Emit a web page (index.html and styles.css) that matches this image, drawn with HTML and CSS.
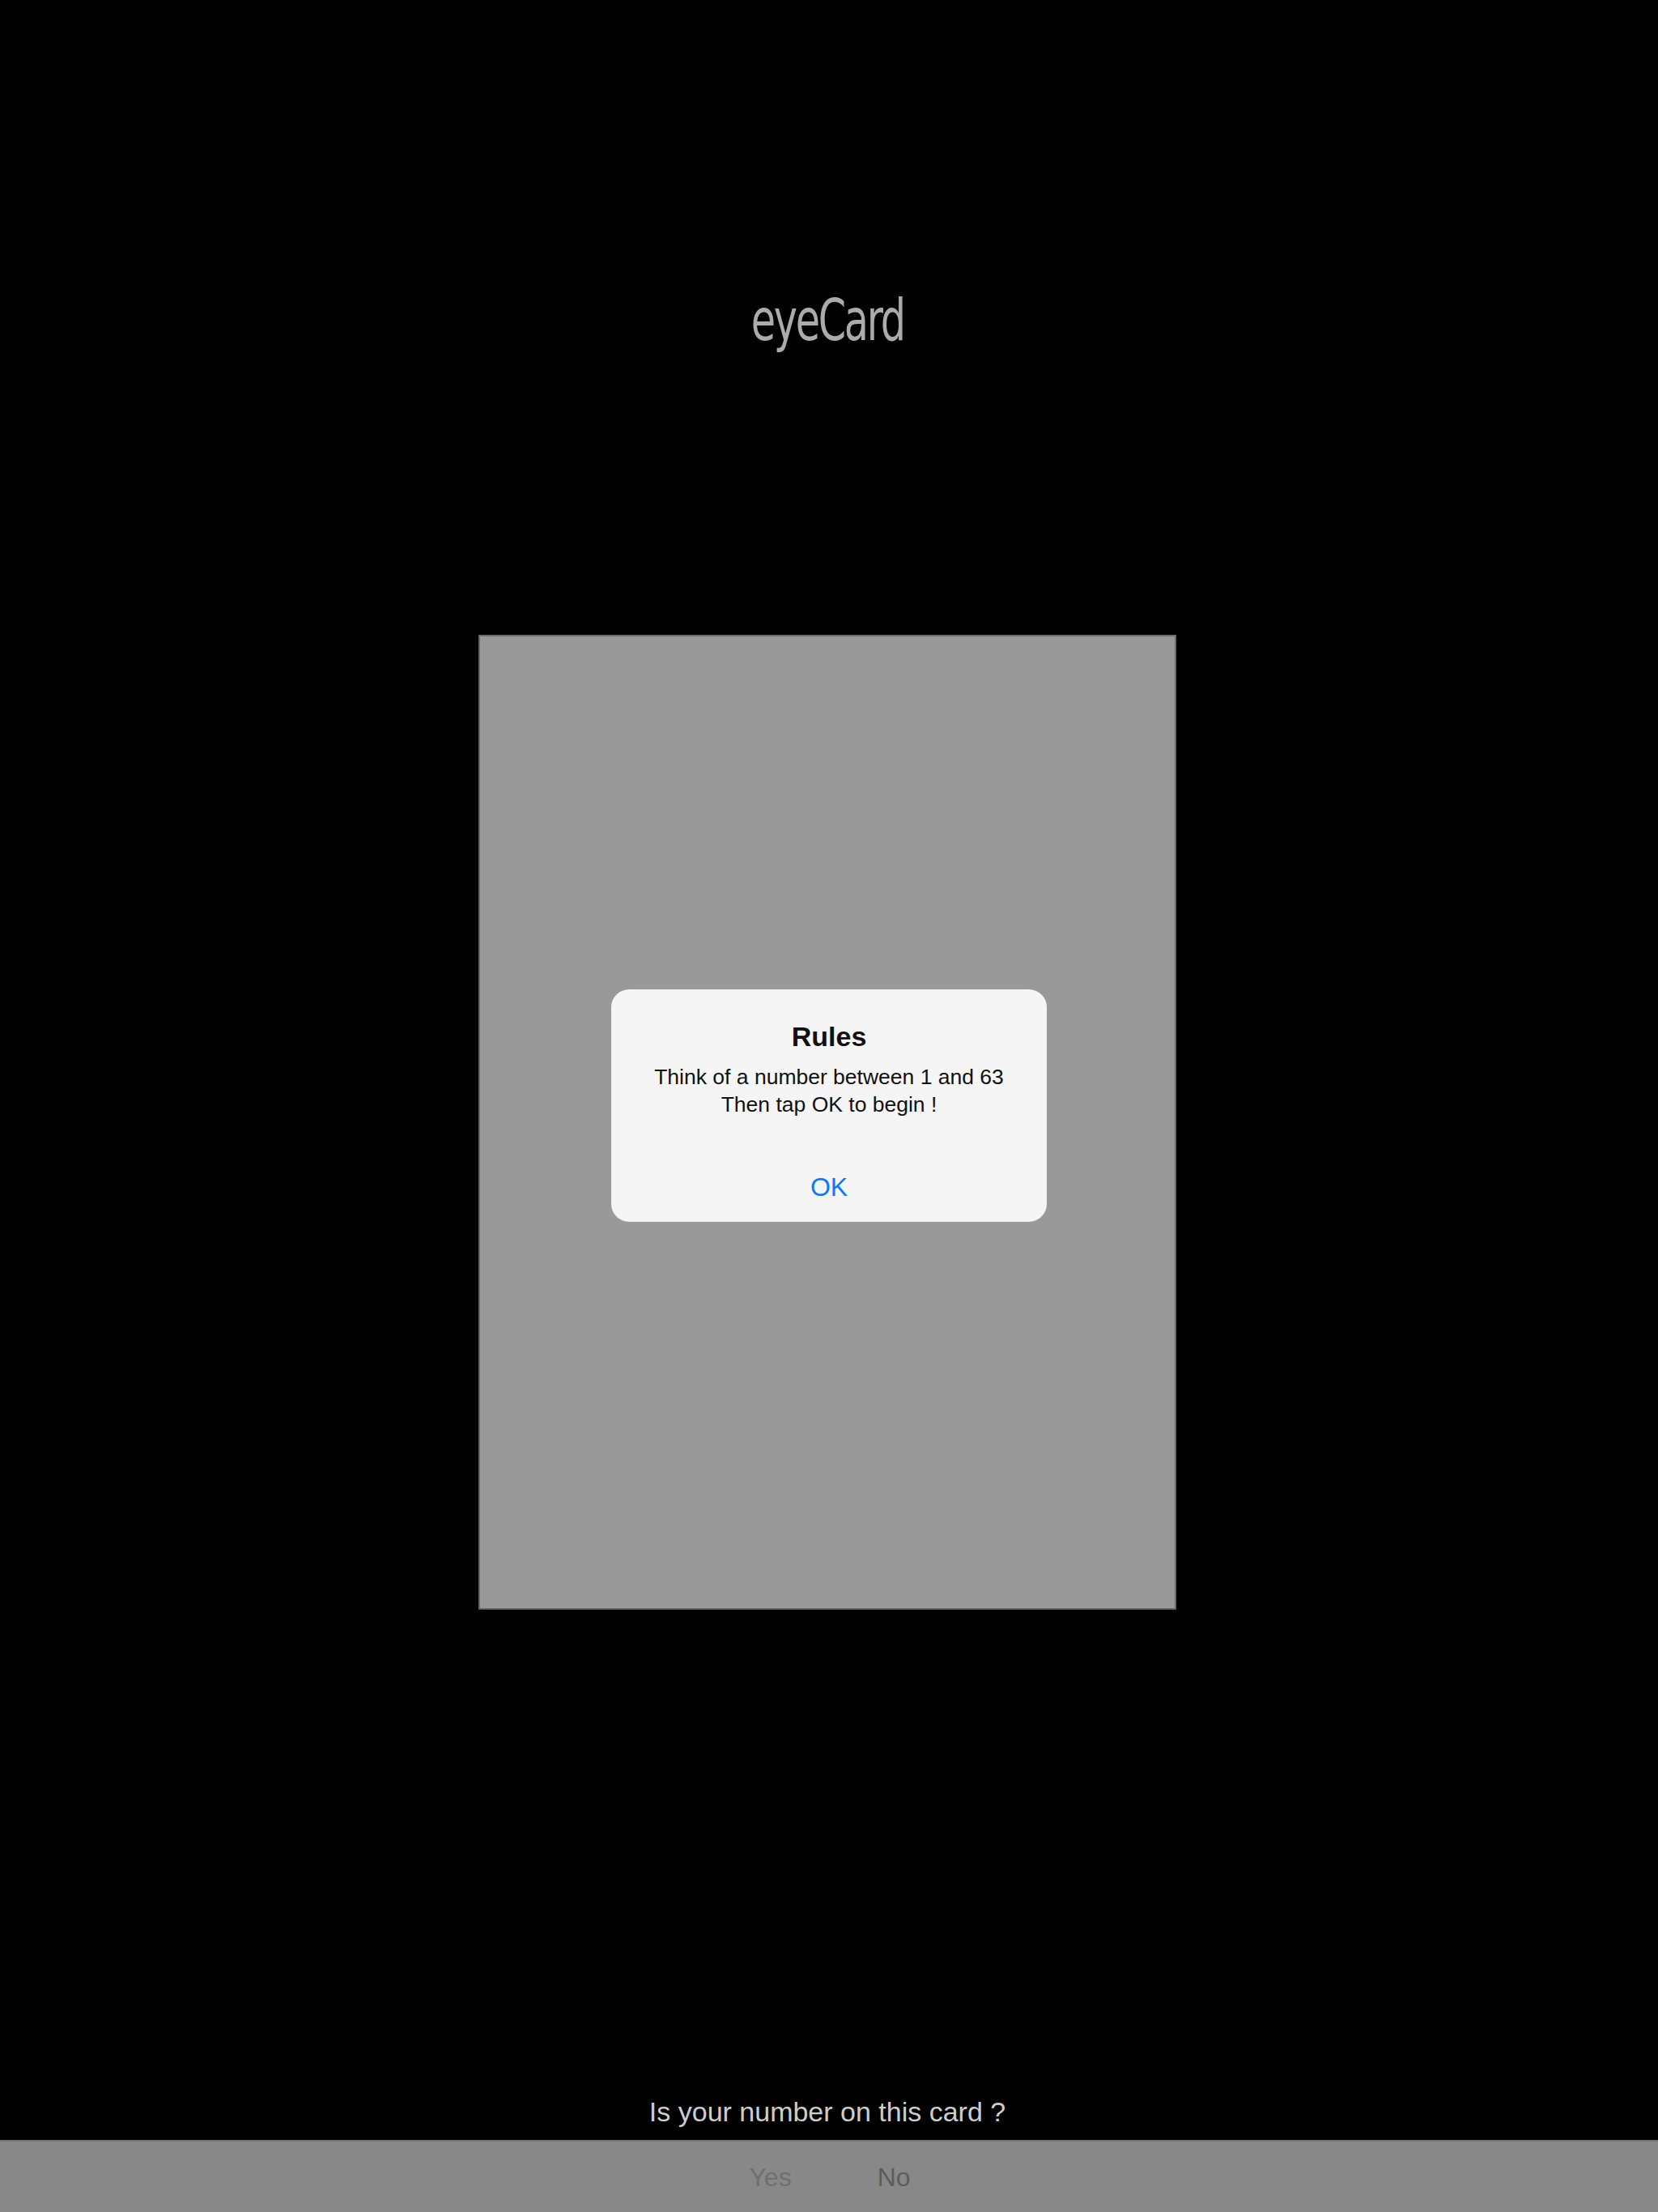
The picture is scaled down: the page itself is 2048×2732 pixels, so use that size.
FILE: index.html
```html
<!DOCTYPE html>
<html lang="en">
<head>
<meta charset="utf-8">
<title>eyeCard</title>
<link rel="stylesheet" href="styles.css">
</head>
<body>
<div class="screen">
  <h1 class="title">eyeCard</h1>
  <div class="card"></div>
  <p class="prompt">Is your number on this card ?</p>
  <div class="toolbar">
    <span class="btn btn-yes">Yes</span>
    <span class="btn btn-no">No</span>
  </div>
  <div class="overlay">
    <div class="alert">
      <div class="alert-title">Rules</div>
      <div class="alert-message">Think of a number between 1 and 63<br>Then tap OK to begin !</div>
      <div class="alert-action">OK</div>
    </div>
  </div>
</div>
</body>
</html>
```

FILE: styles.css
```css
html, body {
  margin: 0;
  padding: 0;
  background: #000;
}

.screen {
  position: relative;
  width: 2048px;
  height: 2732px;
  display: flex;
  flex-direction: column;
  align-items: center;
  background: #000;
  font-family: "Liberation Sans", Arial, sans-serif;
  overflow: hidden;
}

.title {
  margin: 355px 0 0 0;
  font-family: "DejaVu Sans Condensed", "DejaVu Sans", sans-serif;
  font-weight: normal;
  font-size: 72px;
  line-height: 80px;
  letter-spacing: -3px;
  color: #ababab;
  transform: translateX(-2px) scaleX(0.76);
}

.card {
  margin-top: 349px;
  width: 862px;
  height: 1204px;
  box-sizing: border-box;
  background: #999999;
  border: 2px solid #6c6c6c;
  transform: translateX(-2px);
}

.prompt {
  margin: auto 0 15px 0;
  font-size: 34px;
  line-height: 40px;
  color: #cdcdcd;
  transform: translateX(-2px);
}

.toolbar {
  align-self: stretch;
  height: 89px;
  box-sizing: border-box;
  border-top: 2px solid #767676;
  background: #888888;
  display: flex;
  justify-content: center;
  align-items: center;
  gap: 106px;
  padding-left: 2px;
}

.btn {
  font-size: 32px;
  line-height: 40px;
}

.btn-yes { color: #6f6f6f; }
.btn-no { color: #5c5c5c; }

.overlay {
  position: absolute;
  inset: 0;
  display: flex;
  align-items: center;
  justify-content: center;
}

.alert {
  width: 538px;
  height: 287px;
  box-sizing: border-box;
  padding-top: 38px;
  border-radius: 22px;
  background: #f5f5f5;
  display: flex;
  flex-direction: column;
  align-items: center;
  text-align: center;
  color: #000;
  transform: translate(0px, -1px);
}

.alert-title {
  font-size: 34px;
  line-height: 40px;
  font-weight: 600;
  color: #111;
}

.alert-message {
  margin-top: 13px;
  font-size: 26.5px;
  line-height: 34px;
  color: #111;
}

.alert-action {
  margin-top: 65px;
  font-size: 32px;
  line-height: 40px;
  color: #0a7aff;
}
```
